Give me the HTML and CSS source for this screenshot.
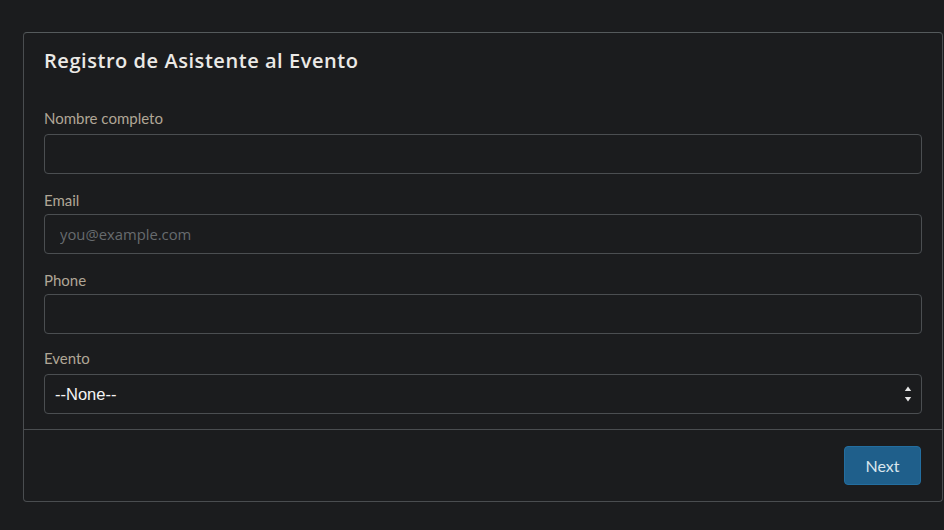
FILE: index.html
```html
<!DOCTYPE html>
<html lang="es">
<head>
<meta charset="utf-8">
<title>Registro de Asistente al Evento</title>
<link rel="stylesheet" href="styles.css">
</head>
<body>
<div class="page">
  <form class="card">
    <div class="card-body">
      <h1 class="title">Registro de Asistente al Evento</h1>
      <div class="field first">
        <label class="label" for="nombre">Nombre completo</label>
        <input class="input" id="nombre" type="text">
      </div>
      <div class="field">
        <label class="label" for="email">Email</label>
        <input class="input" id="email" type="email" placeholder="you@example.com">
      </div>
      <div class="field">
        <label class="label" for="phone">Phone</label>
        <input class="input" id="phone" type="tel">
      </div>
      <div class="field last">
        <label class="label" for="evento">Evento</label>
        <div class="select-wrap">
          <select class="input select" id="evento">
            <option>--None--</option>
          </select>
          <svg class="select-arrows" width="8" height="18" viewBox="0 0 8 18" aria-hidden="true">
            <path d="M4 1.5 L7.2 6 L0.8 6 Z" fill="#e6e6e6"/>
            <path d="M0.8 12 L7.2 12 L4 16.5 Z" fill="#e6e6e6"/>
          </svg>
        </div>
      </div>
    </div>
    <div class="card-footer">
      <button class="btn" type="button">Next</button>
    </div>
  </form>
</div>
</body>
</html>
```
FILE: styles.css
```css
html, body {
  margin: 0;
  padding: 0;
  background: #1b1c1e;
  height: 100%;
}
body {
  font-family: Lato, "Liberation Sans", sans-serif;
  overflow: hidden;
}
.page {
  padding: 32px 1px 0 23px;
}
.card {
  display: flex;
  flex-direction: column;
  border: 1px solid #4a4d50;
  border-top-color: #555a5c;
  border-radius: 4px;
  background: #1b1c1e;
}
.card-body {
  padding: 14px 20px 15px 20px;
  display: flex;
  flex-direction: column;
}
.title {
  margin: 0;
  font-family: "Open Sans", "Noto Sans", sans-serif;
  font-weight: 600;
  font-size: 20px;
  line-height: 28px;
  color: #ebe9e6;
  letter-spacing: 0.55px;
}
.field {
  display: flex;
  flex-direction: column;
  margin-top: 16px;
}
.field.first {
  margin-top: 33px;
}
.field.first .label {
  margin-bottom: 6px;
}
.field.last {
  margin-top: 14px;
}
.label {
  font-size: 15px;
  line-height: 20px;
  color: #b0a696;
  margin-bottom: 4px;
}
.field.last .label {
  margin-bottom: 6px;
}
.input {
  box-sizing: border-box;
  height: 40px;
  width: 100%;
  margin: 0;
  border: 1px solid #4b4e51;
  border-radius: 4px;
  background: #1b1c1e;
  color: #f0f0f0;
  font-family: "Open Sans", "Noto Sans", sans-serif;
  font-size: 14.8px;
  padding: 0 12px 0 15px;
  outline: none;
}
.input::placeholder {
  color: #676b6e;
}
.select-wrap {
  position: relative;
}
.select {
  appearance: none;
  -webkit-appearance: none;
  font-family: "Liberation Sans", Arial, sans-serif;
  font-size: 16.5px;
  padding-left: 10px;
  color: #f4f4f4;
}
.select-arrows {
  position: absolute;
  right: 10px;
  top: 11px;
  pointer-events: none;
}
.card-footer {
  border-top: 1px solid #4a4d50;
  padding: 16px 21px 16px 20px;
  display: flex;
  justify-content: flex-end;
}
.btn {
  box-sizing: border-box;
  width: 77px;
  height: 39px;
  background: #1f5f8b;
  border: 1px solid #236ea0;
  border-radius: 4px;
  color: #d9e6ee;
  font-family: Lato, "Liberation Sans", sans-serif;
  font-size: 16px;
  padding: 0;
}
```
